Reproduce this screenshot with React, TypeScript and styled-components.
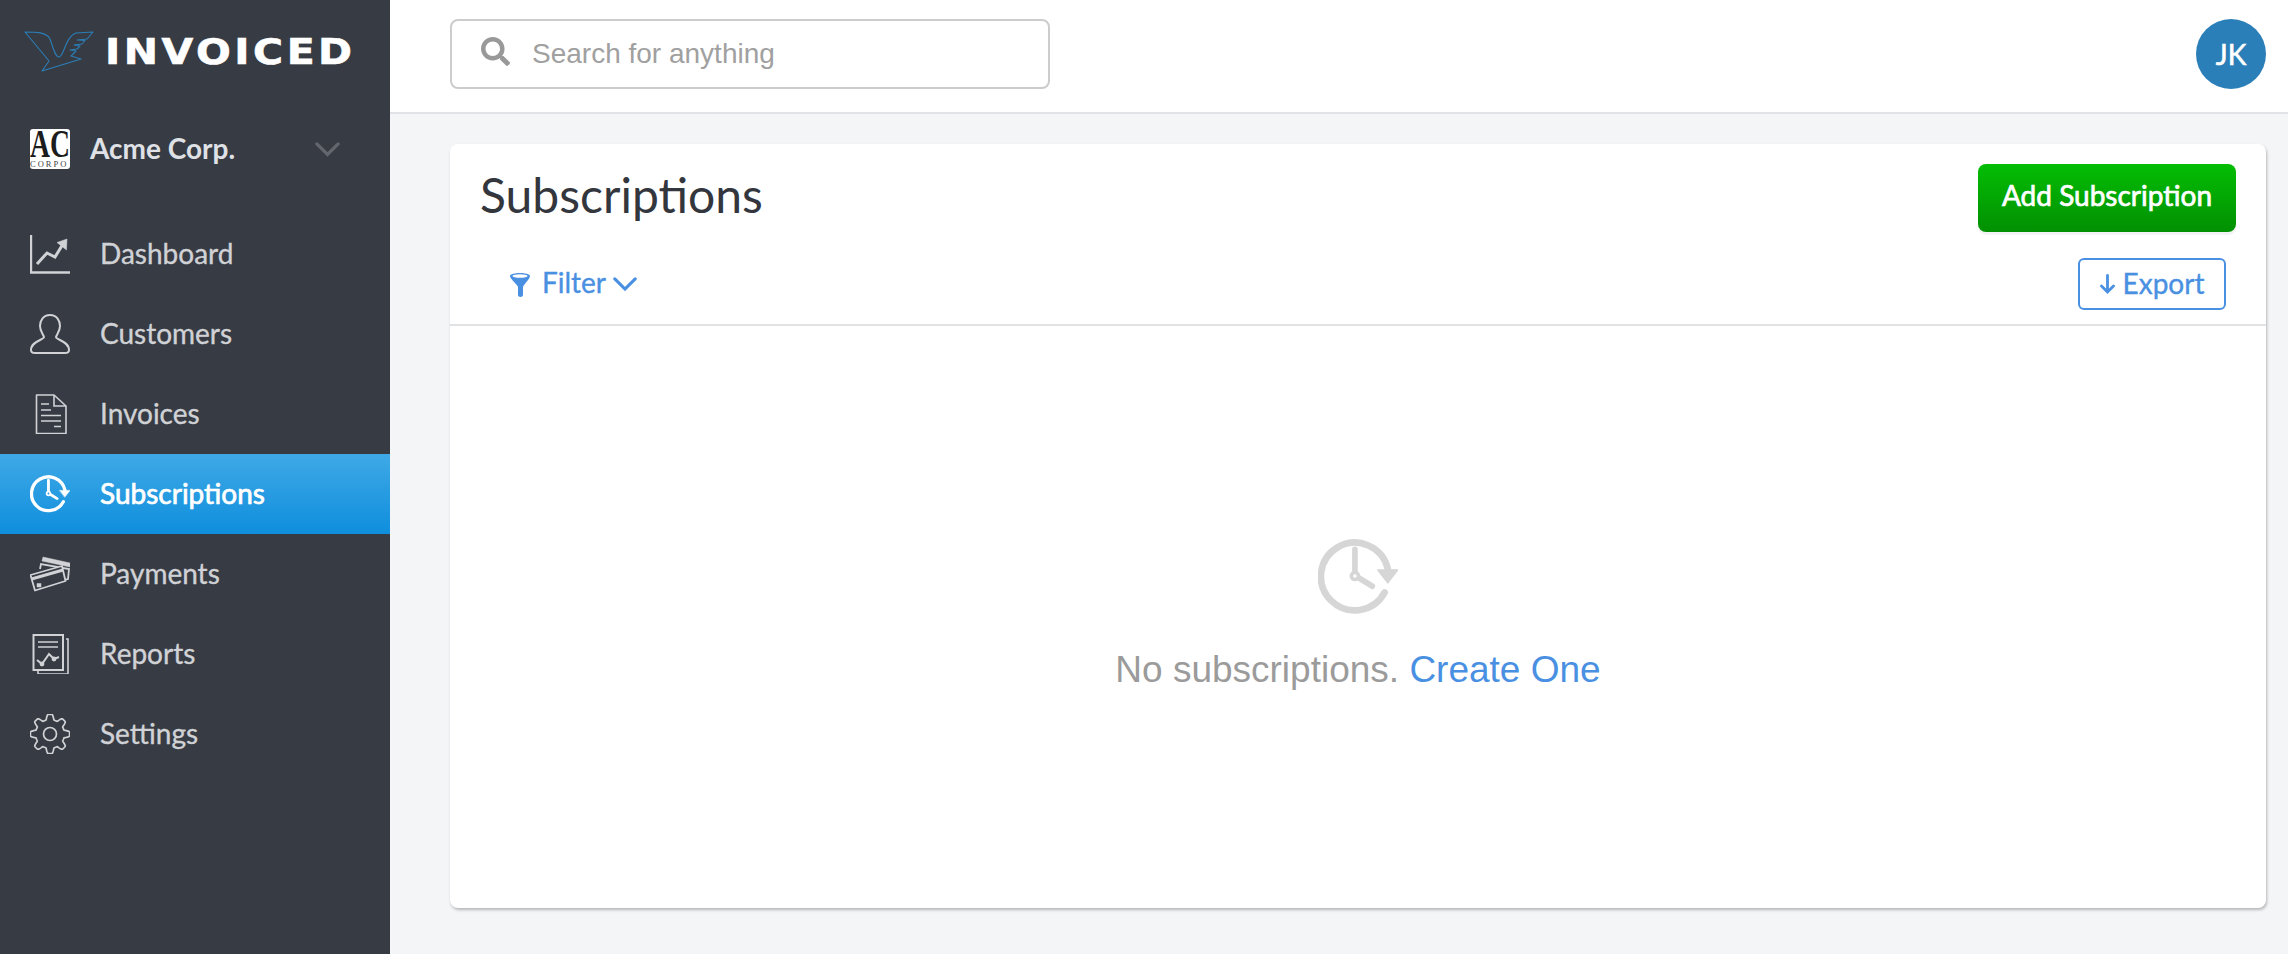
import styled, { createGlobalStyle } from "styled-components";
import { FaSearch } from "react-icons/fa";
import type { ReactNode } from "react";

const GlobalStyle = createGlobalStyle`
  html, body {
    margin: 0;
    padding: 0;
    height: 100%;
    background: #f4f5f7;
    font-family: Lato, "Open Sans", sans-serif;
  }
  * {
    box-sizing: border-box;
  }
`;

const BirdLogo = () => (
  <svg width="72" height="44" viewBox="24 31 72 44" fill="none">
    <path
      d="M25 33 C35 33 47 33 50 40 C53 48 55 58 59 58 C64 58 65 38 76 34 L93 33 L87 40 L77 41 L85 41.5 L82 45 L74 46 L80 47 L77 50 L70 51 L76 52 L71 57 L81 60 L42 72 L49 62 Z"
      stroke="#2b7fb8"
      strokeWidth="1.1"
      strokeLinejoin="round"
    />
  </svg>
);

const DashboardIcon = () => (
  <svg width="40" height="40" viewBox="0 0 40 40" fill="none" stroke="currentColor">
    <path d="M1 1 V38.5 H40" strokeWidth="2.4" />
    <path d="M7 30 L17 19 L25 23 L33 10" strokeWidth="3" />
    <path d="M27 8.5 L37 5 L36.5 16 Z" fill="currentColor" strokeWidth="0.5" />
  </svg>
);

const CustomersIcon = () => (
  <svg width="40" height="40" viewBox="0 0 40 40" fill="none" stroke="currentColor" strokeWidth="2">
    <path d="M20 1 C13 1 10 7 10 12 C10 17 13 20 14 23 C14 26 1 27 1 36 C1 39 3 39 5 39 H35 C37 39 39 39 39 36 C39 27 26 26 26 23 C27 20 30 17 30 12 C30 7 27 1 20 1 Z" />
  </svg>
);

const InvoicesIcon = () => (
  <svg width="40" height="40" viewBox="0 0 40 40" fill="none" stroke="currentColor" strokeWidth="1.6">
    <path d="M6.5 1 H24 L36 12 V39.5 H6.5 Z" strokeLinejoin="round" />
    <path d="M24 1 V12 H36" />
    <path d="M11 10 H19 M11 16 H21 M11 21.500 H31 M11 27 H31 M24 32.500 H31" />
  </svg>
);

const ClockIcon = ({ size, hole }: { size: number; hole: string }) => (
  <svg width={size} height={size} viewBox="0 0 78 78" fill="none" stroke="currentColor" strokeLinecap="round">
    <path d="M65 54 A33 33 0 1 1 68 31" strokeWidth="6.5" />
    <path d="M58 32 H78 L68 45 Z" fill="currentColor" strokeWidth="1" strokeLinejoin="round" />
    <path d="M36 12 V33 M40 40 L53 48" strokeWidth="5.500" />
    <circle cx="36" cy="38" r="3.5" fill={hole} strokeWidth="3.5" />
  </svg>
);

const PaymentsIcon = () => (
  <svg width="40" height="40" viewBox="0 0 40 40" fill="none" stroke="currentColor" strokeWidth="1.8">
    <path d="M13 3 L40 9 V13 L12 7 Z" fill="currentColor" strokeWidth="0.5" />
    <path d="M10 15 L11 10 L39 15 L38 25 L34 26" />
    <path d="M0.5 21 L32 12 L35.5 27 L5 36.5 Z" strokeLinejoin="round" fill="#373b43" />
    <path d="M1.5 25 L33 16" strokeWidth="3" />
    <path d="M7 29.500 H11 V33 H7 Z" fill="currentColor" strokeWidth="0.5" />
  </svg>
);

const ReportsIcon = () => (
  <svg width="40" height="40" viewBox="0 0 40 40" fill="none" stroke="currentColor" strokeWidth="1.6">
    <path d="M3.5 1 H33 V36 H3.5 Z" strokeWidth="2" />
    <path d="M36 5 H38 V40 H8 V37" />
    <path d="M8 8 H28 M8 13 H28" />
    <path d="M7 26 L12 30 L19 20 L24 25 L29 23" strokeWidth="2" />
    <circle cx="12" cy="30" r="1.6" fill="currentColor" />
    <circle cx="24" cy="25" r="1.6" fill="currentColor" />
  </svg>
);

// eight rounded teeth, flattened at the top and bottom of the wave
const gearPath = () => {
  const points: string[] = [];
  for (let i = 0; i < 240; i++) {
    const angle = (i / 240) * Math.PI * 2 + Math.PI / 8;
    const wave = Math.max(-1, Math.min(1, 1.7 * Math.cos(8 * angle)));
    const radius = 17 + 2.6 * wave;
    points.push(`${(20 + radius * Math.cos(angle)).toFixed(2)} ${(20 + radius * Math.sin(angle)).toFixed(2)}`);
  }
  return `M${points.join(" L")} Z`;
};

const SettingsIcon = () => (
  <svg width="40" height="40" viewBox="0 0 40 40" fill="none" stroke="currentColor" strokeWidth="1.7">
    <path d={gearPath()} strokeLinejoin="round" />
    <circle cx="20" cy="20" r="6.5" />
  </svg>
);

const FunnelIcon = () => (
  <svg width="20" height="25" viewBox="0 0 20 25">
    <path
      d="M0 4 C0 0 20 0 20 4 C20 7 14 12 13 15 V23 C13 25.500 8 25.500 8 23 V15 C7 12 0 7 0 4 Z"
      fill="#4a90e2"
    />
    <ellipse cx="10" cy="4" rx="7.500" ry="1.800" fill="#fff" />
  </svg>
);

const Chevron = ({ color, width }: { color: string; width: number }) => (
  <svg width={width} height={width * 0.6} viewBox="0 0 20 12" fill="none" stroke={color} strokeWidth="2.6" strokeLinecap="round">
    <path d="M1.500 1.500 L10 10 L18.500 1.500" />
  </svg>
);

const ExportArrow = () => (
  <svg width="15" height="20" viewBox="0 0 15 20" fill="none" stroke="#4a90e2" strokeWidth="2.8" strokeLinecap="round">
    <path d="M7.500 1.500 V18 M1.500 12 L7.500 18 L13.500 12" />
  </svg>
);

type NavEntry = { label: string; icon: ReactNode; active?: boolean };

const navEntries: NavEntry[] = [
  { label: "Dashboard", icon: <DashboardIcon /> },
  { label: "Customers", icon: <CustomersIcon /> },
  { label: "Invoices", icon: <InvoicesIcon /> },
  { label: "Subscriptions", icon: <ClockIcon size={42} hole="#2a9ce3" />, active: true },
  { label: "Payments", icon: <PaymentsIcon /> },
  { label: "Reports", icon: <ReportsIcon /> },
  { label: "Settings", icon: <SettingsIcon /> },
];

const App = () => {
  return (
    <Page>
      <GlobalStyle />
      <Sidebar>
        <LogoRow>
          <BirdLogo />
          <LogoText>INVOICED</LogoText>
        </LogoRow>
        <CompanyRow>
          <CompanyLogo>
            <CompanyInitials>AC</CompanyInitials>
            <CompanyWord>CORPO</CompanyWord>
          </CompanyLogo>
          <CompanyName>Acme Corp.</CompanyName>
          <Chevron color="#63666c" width={25} />
        </CompanyRow>
        <nav>
          {navEntries.map((entry) => (
            <NavRow key={entry.label} $active={entry.active}>
              <NavIcon>{entry.icon}</NavIcon>
              <NavLabel>{entry.label}</NavLabel>
            </NavRow>
          ))}
        </nav>
      </Sidebar>
      <Main>
        <TopBar>
          <SearchBox>
            <SearchIcon>
              <FaSearch size={29} />
            </SearchIcon>
            <SearchPlaceholder>Search for anything</SearchPlaceholder>
          </SearchBox>
          <Avatar>JK</Avatar>
        </TopBar>
        <Content>
          <Card>
            <CardHeader>
              <Title>Subscriptions</Title>
              <AddButton>Add Subscription</AddButton>
            </CardHeader>
            <Toolbar>
              <FilterButton>
                <FunnelIcon />
                <FilterLabel>Filter</FilterLabel>
                <Chevron color="#4a90e2" width={24} />
              </FilterButton>
              <ExportButton>
                <ExportArrow />
                <ExportLabel>Export</ExportLabel>
              </ExportButton>
            </Toolbar>
            <EmptyState>
              <EmptyIcon>
                <ClockIcon size={80} hole="#fff" />
              </EmptyIcon>
              <EmptyText>
                No subscriptions. <CreateLink>Create One</CreateLink>
              </EmptyText>
            </EmptyState>
          </Card>
        </Content>
      </Main>
    </Page>
  );
};

export default App;

const Page = styled.div`
  display: flex;
  min-height: 954px;
`;

const Sidebar = styled.aside`
  width: 390px;
  flex-shrink: 0;
  background: #373b43;
`;

const LogoRow = styled.div`
  display: flex;
  align-items: center;
  gap: 9px;
  height: 104px;
  padding-left: 24px;
`;

const LogoText = styled.span`
  display: inline-block;
  font-family: "DejaVu Sans", sans-serif;
  font-weight: 700;
  font-size: 35px;
  line-height: 1;
  letter-spacing: 3px;
  color: #fff;
  -webkit-text-stroke: 0.6px #fff;
  transform: scaleX(1.17);
  transform-origin: left center;
`;

const CompanyRow = styled.div`
  display: flex;
  align-items: center;
  height: 90px;
  margin-bottom: 20px;
  padding-left: 30px;
`;

const CompanyLogo = styled.div`
  width: 40px;
  height: 40px;
  flex-shrink: 0;
  background: #fff;
  border-radius: 3px;
  overflow: hidden;
`;

const CompanyInitials = styled.div`
  font-family: "Liberation Serif", serif;
  font-weight: 700;
  font-size: 40px;
  line-height: 30px;
  height: 30px;
  color: #1c1c1c;
  white-space: nowrap;
  transform: scaleX(0.69);
  transform-origin: left center;
`;

const CompanyWord = styled.div`
  font-family: "Liberation Serif", serif;
  font-size: 8.5px;
  line-height: 10px;
  letter-spacing: 2px;
  color: #444;
  white-space: nowrap;
`;

const CompanyName = styled.span`
  width: 245px;
  padding-left: 20px;
  margin-top: -2px;
  font-size: 28px;
  font-weight: 700;
  color: #dfe1e6;
`;

const NavRow = styled.div<{ $active?: boolean }>`
  display: flex;
  align-items: center;
  gap: 30px;
  height: 80px;
  padding-left: 30px;
  font-size: 28px;
  color: ${(p) => (p.$active ? "#fff" : "#d0d2d6")};
  -webkit-text-stroke: ${(p) => (p.$active ? "0.7px" : "0.35px")};
  background: ${(p) => (p.$active ? "linear-gradient(#3fa9e6, #0f8edd)" : "transparent")};
`;

const NavIcon = styled.span`
  display: flex;
  align-items: center;
  justify-content: center;
  width: 40px;
  height: 40px;
`;

const NavLabel = styled.span`
  margin-top: -3px;
`;

const Main = styled.main`
  flex: 1;
  min-width: 0;
  background: #f4f5f7;
`;

const TopBar = styled.header`
  display: flex;
  align-items: center;
  justify-content: space-between;
  height: 114px;
  padding: 0 22px 4px 60px;
  background: #fff;
  border-bottom: 2px solid #e2e3e6;
`;

const SearchBox = styled.div`
  display: flex;
  align-items: center;
  width: 600px;
  height: 70px;
  padding-left: 29px;
  border: 2px solid #cccccc;
  border-radius: 8px;
  background: #fff;
`;

const SearchIcon = styled.span`
  display: flex;
  color: #999;
  margin-right: 22px;
  margin-top: -6px;
`;

const SearchPlaceholder = styled.span`
  font-family: "Liberation Sans", Arial, sans-serif;
  font-size: 28px;
  color: #a0a0a0;
`;

const Avatar = styled.div`
  display: flex;
  align-items: center;
  justify-content: center;
  width: 70px;
  height: 70px;
  border-radius: 50%;
  background: #2b7fb8;
  color: #fff;
  font-size: 28px;
  -webkit-text-stroke: 0.6px #fff;
`;

const Content = styled.div`
  padding: 30px 22px 46px 60px;
`;

const Card = styled.section`
  height: 764px;
  background: #fff;
  border-radius: 8px;
  box-shadow: 1px 2px 3px rgba(0, 0, 0, 0.25);
`;

const CardHeader = styled.div`
  display: flex;
  align-items: flex-start;
  justify-content: space-between;
  padding: 20px 30px 0 30px;
`;

const Title = styled.h1`
  margin: 0;
  font-size: 48px;
  font-weight: 400;
  line-height: 62px;
  color: #33363d;
`;

const AddButton = styled.button`
  width: 258px;
  height: 68px;
  padding: 0 0 6px;
  border: none;
  border-radius: 8px;
  background: linear-gradient(#04bd04, #029002);
  box-shadow: 0 3px 0 #f3f3f5;
  color: #fff;
  font-family: inherit;
  font-size: 28px;
  font-weight: 400;
  -webkit-text-stroke: 0.7px #fff;
`;

const Toolbar = styled.div`
  display: flex;
  align-items: center;
  justify-content: space-between;
  margin-top: 26px;
  padding: 0 40px 14px 60px;
  border-bottom: 2px solid #e1e2e4;
`;

const FilterButton = styled.div`
  display: flex;
  align-items: center;
  gap: 7px;
  font-size: 28px;
  color: #4a90e2;
  -webkit-text-stroke: 0.35px #4a90e2;
`;

const FilterLabel = styled.span`
  margin-left: 5px;
  margin-top: -4px;
`;

const ExportButton = styled.div`
  display: flex;
  align-items: center;
  justify-content: center;
  gap: 8px;
  width: 148px;
  height: 52px;
  border: 2px solid #4a90e2;
  border-radius: 6px;
  font-size: 28px;
  color: #4a90e2;
  -webkit-text-stroke: 0.35px #4a90e2;
`;

const ExportLabel = styled.span`
  margin-top: -3px;
`;

const EmptyState = styled.div`
  display: flex;
  flex-direction: column;
  align-items: center;
  padding-top: 211px;
`;

const EmptyIcon = styled.div`
  display: flex;
  color: #d6d6d6;
  height: 80px;
`;

const EmptyText = styled.p`
  margin: 31px 0 0;
  font-family: "Liberation Sans", Arial, sans-serif;
  font-size: 37px;
  line-height: 44px;
  color: #9b9b9b;
`;

const CreateLink = styled.span`
  color: #4a90e2;
`;
